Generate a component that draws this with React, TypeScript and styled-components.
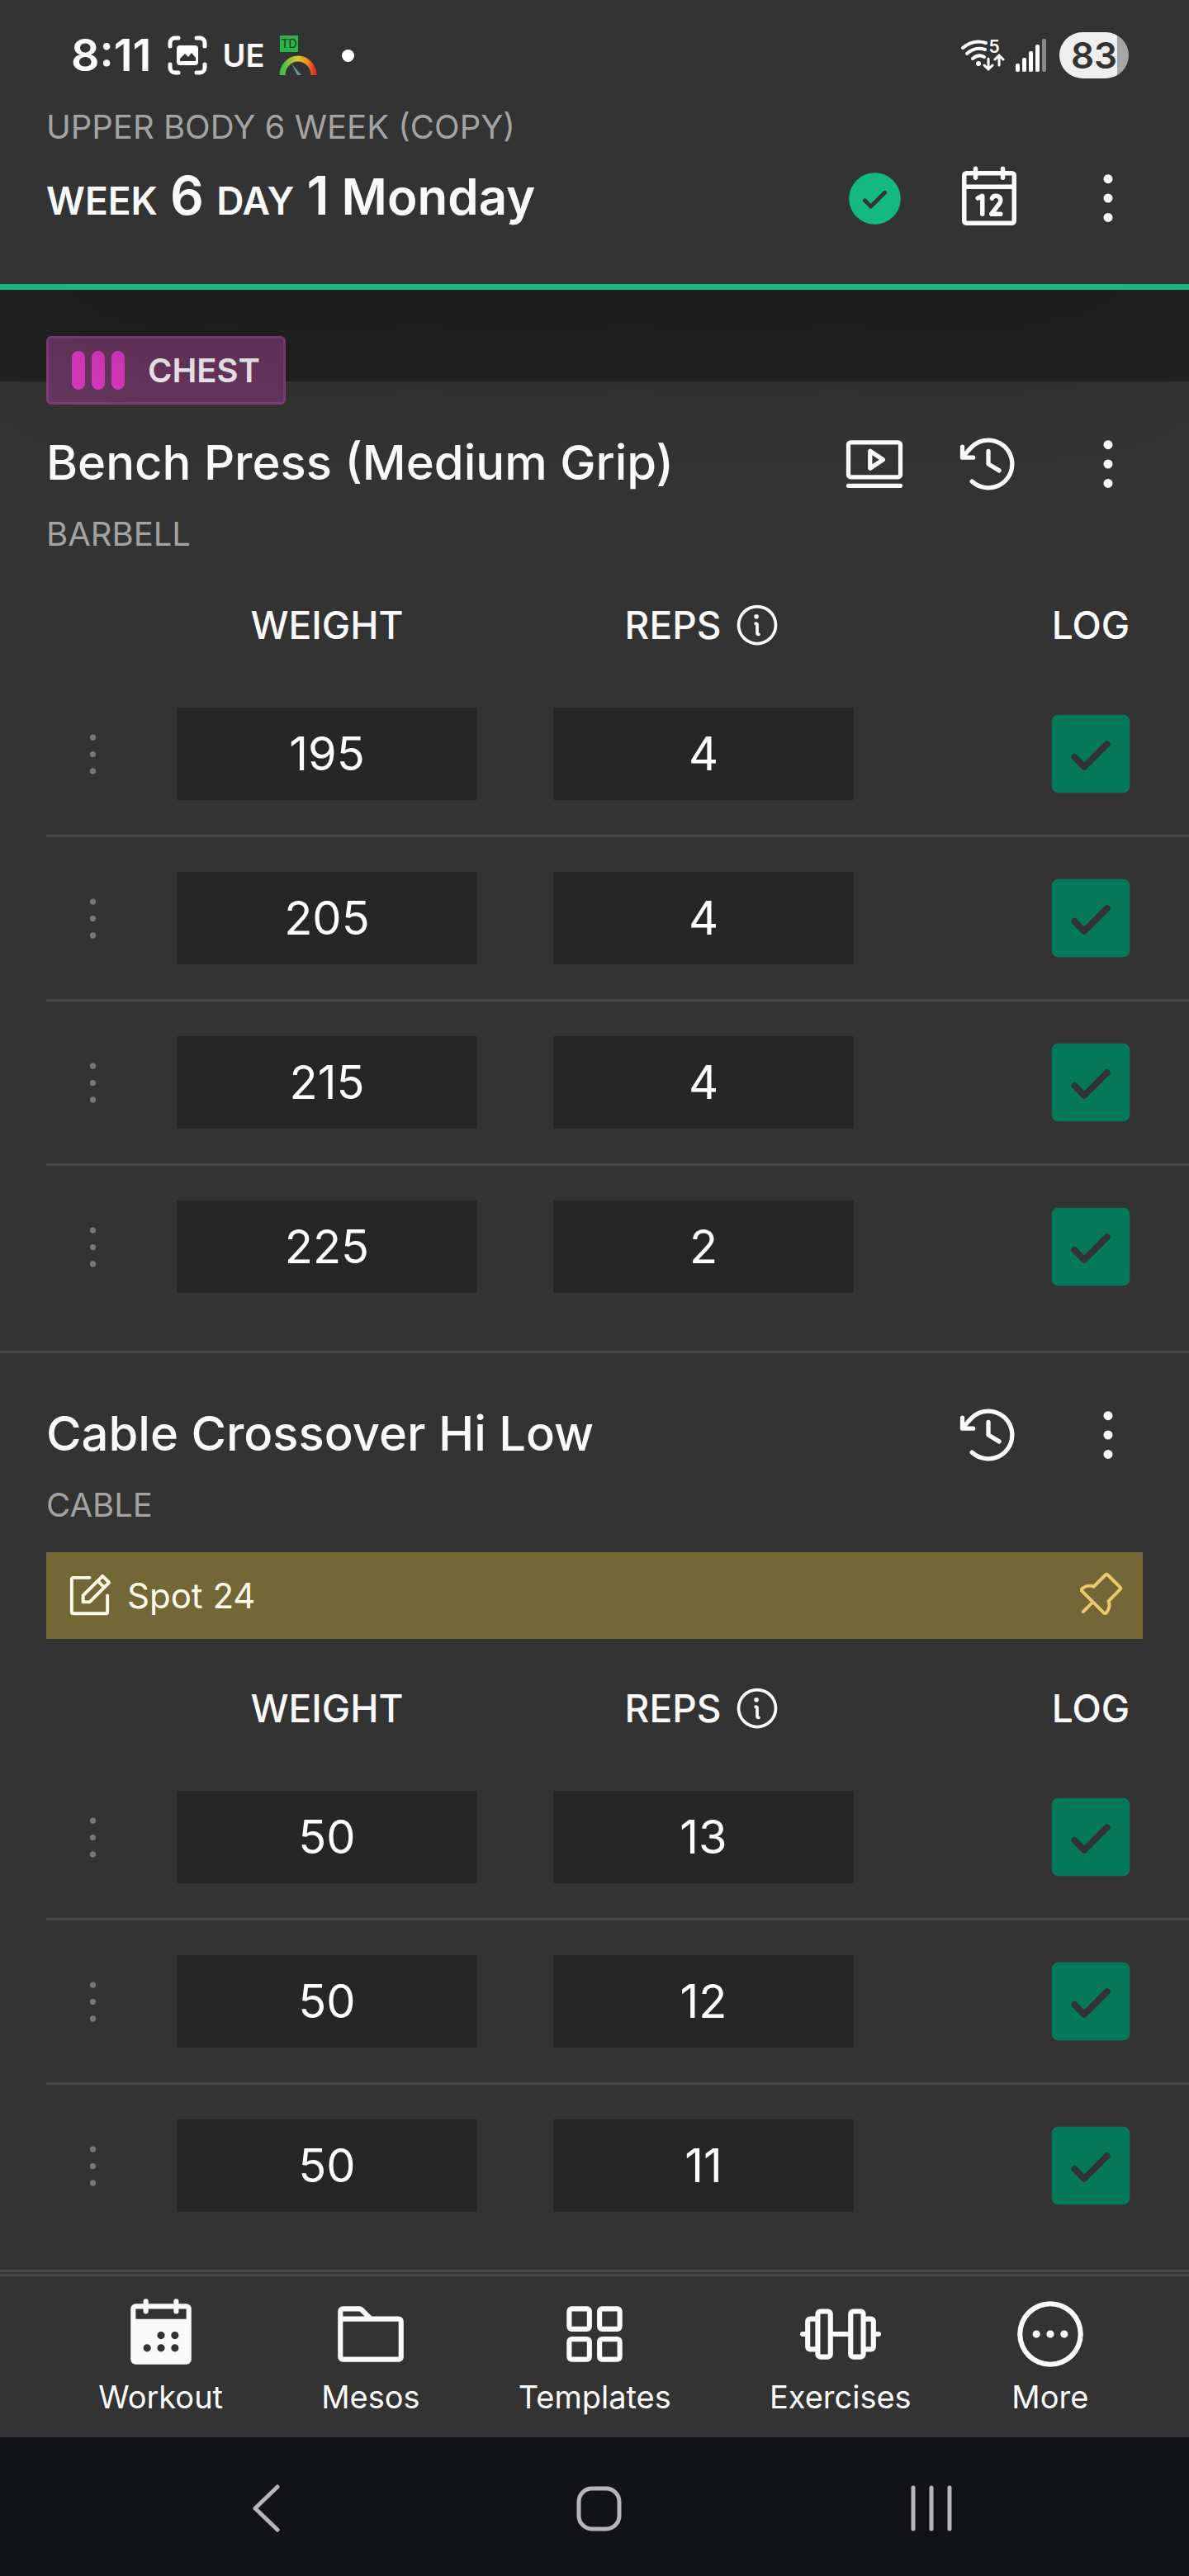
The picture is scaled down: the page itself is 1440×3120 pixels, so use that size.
import React, { useState } from 'react';
import styled, { createGlobalStyle, css } from 'styled-components';
import {
  PiBarbell,
  PiCalendar,
  PiCalendarDotsFill,
  PiCheckCircleFill,
  PiCheckSquareFill,
  PiClockCounterClockwise,
  PiDotsThreeCircle,
  PiDotsThreeVertical,
  PiDotsThreeVerticalBold,
  PiFolder,
  PiInfo,
  PiNotePencil,
  PiPushPin,
  PiSquaresFour,
  PiVideo,
} from 'react-icons/pi';

const color = {
  panel: '#333333',
  strip: '#222222',
  well: '#262626',
  line: '#464646',
  text: '#fafafa',
  muted: '#a3a3a3',
  faint: '#777777',
  green: '#14b881',
  greenDark: '#047857',
  pink: '#db39bd',
  note: '#736637',
  pin: '#e8ca6d',
  system: '#121317',
  systemIcon: '#b6b6b8',
};

const GlobalStyle = createGlobalStyle`
  *, *::before, *::after { box-sizing: border-box; }
  body {
    margin: 0;
    background: ${color.panel};
    color: ${color.text};
    font-family: Inter, "Noto Sans", sans-serif;
  }
  svg { display: block; flex: none; }
`;

const Screen = styled.div`
  min-height: 100vh;
  display: flex;
  flex-direction: column;
`;

/* ---------- header ---------- */

const Header = styled.header`
  position: sticky;
  top: 0;
  z-index: 2;
  background: ${color.panel};
  border-bottom: 7px solid ${color.green};
  box-shadow: 0 88px 175px -42px rgba(0, 0, 0, 0.25);
`;

const StatusBar = styled.div`
  height: 134px;
  padding: 0 73px 0 86px;
  display: flex;
  align-items: center;
  justify-content: space-between;
`;

const StatusGroup = styled.div<{ $gap: number }>`
  display: flex;
  align-items: center;
  gap: ${(p) => p.$gap}px;
`;

const Clock = styled.time`
  font-size: 54px;
  line-height: 60px;
  font-weight: 600;
  margin-right: 2px;
`;

const Carrier = styled.span`
  font-size: 38px;
  line-height: 48px;
  font-weight: 600;
`;

const NotificationDot = styled.span`
  width: 15px;
  height: 15px;
  margin-left: 12px;
  border-radius: 50%;
  background: #ffffff;
`;

const Battery = styled.span`
  width: 84px;
  height: 56px;
  margin-left: 4px;
  border-radius: 28px;
  display: grid;
  place-items: center;
  background: linear-gradient(90deg, #efefef 83%, #a5a5a5 83%);
  color: ${color.panel};
  font-size: 44px;
  line-height: 56px;
  font-weight: 600;
`;

const PlanName = styled.p`
  margin: 0;
  padding: 0 56px;
  color: ${color.muted};
  font-size: 40px;
  line-height: 40px;
`;

const TitleRow = styled.div`
  display: flex;
  align-items: center;
  justify-content: space-between;
  height: 88px;
`;

const DayRow = styled(TitleRow)`
  margin: 22px 0 60px;
  padding: 0 56px;
`;

const DayTitle = styled.h1`
  margin: 0;
  font-size: 60px;
  line-height: 88px;
  font-weight: 600;
`;

const DayWord = styled.span`
  font-size: 46px;
`;

const DayNumber = styled.span`
  font-size: 64px;
`;

const Actions = styled.div`
  display: flex;
  align-items: center;
  gap: 58px;
`;

const ActionPair = styled.div`
  display: flex;
  align-items: center;
  gap: 52px;
`;

const IconButton = styled.button<{ $tint?: string }>`
  width: 86px;
  height: 88px;
  padding: 0;
  border: 0;
  background: none;
  color: ${(p) => p.$tint ?? color.text};
  display: grid;
  place-items: center;
  cursor: pointer;
`;

/* ---------- exercise sections ---------- */

const Main = styled.main`
  flex: 1;
  padding-bottom: 2px;
`;

const Strip = styled.div`
  height: 111px;
  background: ${color.strip};
`;

const Section = styled.section<{ $tagged: boolean }>`
  padding-left: 56px;
  padding-bottom: 28px;
  border-bottom: 3px solid ${color.line};
  ${(p) =>
    !p.$tagged &&
    css`
      padding-top: 55px;
    `}
`;

const Inset = styled.div`
  padding-right: 56px;
`;

const MuscleTag = styled.div`
  position: relative;
  width: fit-content;
  height: 83px;
  margin: -55px 0 28px;
  padding: 0 28px;
  display: flex;
  align-items: center;
  gap: 28px;
  border: 3px solid #843c79;
  border-radius: 6px;
  background: #67365f;
  color: #f4ecf3;
  font-size: 40px;
  font-weight: 600;
`;

const Bars = styled.span`
  display: flex;
  gap: 8px;
`;

const Bar = styled.span`
  width: 16px;
  height: 47px;
  border-radius: 8px;
  background: ${color.pink};
`;

const ExerciseName = styled.h2`
  margin: 0;
  padding-bottom: 4px;
  font-size: 58px;
  line-height: 84px;
  font-weight: 500;
`;

const Equipment = styled.p`
  margin: 15px 0 0;
  color: ${color.muted};
  font-size: 40px;
  line-height: 52px;
`;

const Note = styled.div`
  display: flex;
  align-items: center;
  gap: 14px;
  height: 105px;
  margin-top: 31px;
  padding: 0 21px;
  background: ${color.note};
  color: #fffbeb;
`;

const NoteText = styled.span`
  flex: 1;
  font-size: 42px;
  line-height: 52px;
`;

const NoteButton = styled.button`
  padding: 0;
  border: 0;
  background: none;
  color: ${color.pin};
  cursor: pointer;
`;

const SetTable = styled.table`
  display: block;
  margin-top: 54px;
`;

const TableHead = styled.thead`
  display: block;
  padding-bottom: 28px;
`;

const TableBody = styled.tbody`
  display: block;
`;

const rowGrid = css`
  display: grid;
  grid-template-columns: 112px 3fr 3fr 2fr;
  align-items: center;
  padding-right: 56px;
`;

const HeadRow = styled.tr`
  ${rowGrid}
  height: 60px;
`;

const HeadCell = styled.th<{ $end?: boolean }>`
  padding: 0;
  display: flex;
  align-items: center;
  justify-content: ${(p) => (p.$end ? 'flex-end' : 'center')};
  gap: 14px;
  font-size: 46px;
  line-height: 60px;
  font-weight: 500;
`;

const LogLabel = styled.span`
  width: 126px;
  text-align: center;
`;

const InfoButton = styled(NoteButton)`
  color: ${color.text};
`;

const SetRow = styled.tr`
  ${rowGrid}
  height: 199px;
  border-bottom: 3px solid ${color.line};

  &:last-child {
    height: 196px;
    border-bottom: 0;
  }
`;

const Cell = styled.td<{ $end?: boolean }>`
  padding: 0;
  display: flex;
  justify-content: ${(p) => (p.$end ? 'flex-end' : 'center')};
`;

const NumberInput = styled.input`
  width: 80%;
  height: 112px;
  padding: 0;
  border: 0;
  border-radius: 0;
  background: ${color.well};
  color: #ffffff;
  font-family: inherit;
  font-size: 56px;
  text-align: center;
`;

const LogCheck = styled.label`
  position: relative;
  display: block;
  color: ${color.greenDark};
  cursor: pointer;
`;

const HiddenCheckbox = styled.input`
  position: absolute;
  inset: 0;
  width: 100%;
  height: 100%;
  margin: 0;
  opacity: 0;

  &:not(:checked) + svg {
    opacity: 0.4;
  }
`;

/* ---------- bottom navigation ---------- */

const Footer = styled.footer`
  position: sticky;
  bottom: 0;
  z-index: 1;
`;

const TabBar = styled.nav`
  display: flex;
  justify-content: space-evenly;
  height: 198px;
  padding-top: 21px;
  border-top: 3px solid ${color.line};
  background: ${color.panel};
`;

const TabLink = styled.a`
  display: flex;
  flex-direction: column;
  align-items: center;
  gap: 2px;
  color: ${color.text};
  font-size: 38px;
  line-height: 50px;
  text-decoration: none;
`;

const SystemBar = styled.div`
  display: grid;
  grid-template-columns: repeat(3, 1fr);
  align-items: center;
  justify-items: center;
  height: 168px;
  padding: 4px 110px 0 120px;
  background: ${color.system};
`;

const SystemButton = styled(NoteButton)`
  color: ${color.systemIcon};
`;

/* ---------- drawings ---------- */

const CaptureIcon = () => (
  <svg width="48" height="48" viewBox="0 0 48 48" fill="none" aria-hidden="true">
    <path
      d="M3 13V9a6 6 0 0 1 6-6h4M35 3h4a6 6 0 0 1 6 6v4M45 35v4a6 6 0 0 1-6 6h-4M13 45H9a6 6 0 0 1-6-6v-4"
      stroke="#fff"
      strokeWidth="5"
      strokeLinecap="round"
    />
    <rect x="11" y="12" width="26" height="24" rx="4" fill="#fff" />
    <path d="M15 31v-3l6-6 4 4 4-5 5 6v4z" fill={color.panel} />
  </svg>
);

const BankIcon = () => (
  <svg width="46" height="50" viewBox="0 0 46 50" aria-hidden="true">
    <defs>
      <linearGradient id="gauge">
        <stop offset="0" stopColor="#3fc14c" />
        <stop offset="0.5" stopColor="#e2c62a" />
        <stop offset="0.8" stopColor="#f08a24" />
        <stop offset="1" stopColor="#e8331c" />
      </linearGradient>
    </defs>
    <rect x="1" y="1" width="22" height="20" fill="#2cb34a" />
    <text x="12" y="16" textAnchor="middle" fontSize="14" fill="#12331a">
      TD
    </text>
    <path d="M4 49a19 20 0 0 1 38 0" fill="none" stroke="url(#gauge)" strokeWidth="7" />
    <path d="M15 35l12 14h-5z" fill="#5f9a97" />
  </svg>
);

const WifiIcon = () => (
  <svg width="54" height="52" viewBox="0 -6 54 52" fill="none" stroke="#fff" aria-hidden="true">
    <path d="M3 11Q16 0 31 5M8 18Q18 9 30 13M15 24Q22 18 29 22" strokeWidth="4" strokeLinecap="round" />
    <circle cx="22" cy="30" r="3" fill="#fff" stroke="none" />
    <path d="M34 24v12M29 32l5 5 5-5M47 32V21M42 25l5-5 5 5" strokeWidth="3" strokeLinecap="round" />
    <text x="41" y="17" textAnchor="middle" fontSize="21" fontWeight="600" fill="#fff" stroke="none">
      5
    </text>
  </svg>
);

const SignalIcon = () => (
  <svg width="38" height="42" viewBox="0 0 38 42" aria-hidden="true">
    <g fill="#fff">
      <rect x="1" y="31" width="5" height="10" rx="2" />
      <rect x="9" y="24" width="5" height="17" rx="2" />
      <rect x="17" y="16" width="5" height="25" rx="2" />
      <rect x="25" y="8" width="5" height="33" rx="2" />
    </g>
    <rect x="33" y="1" width="5" height="40" rx="2" fill="#8a8a8a" />
  </svg>
);

const BackIcon = () => (
  <svg width="60" height="60" viewBox="0 0 60 60" fill="none" stroke="currentColor" aria-hidden="true">
    <path d="M44 4L17 30l27 26" strokeWidth="5" strokeLinecap="round" strokeLinejoin="round" />
  </svg>
);

const HomeIcon = () => (
  <svg width="60" height="60" viewBox="0 0 60 60" fill="none" stroke="currentColor" aria-hidden="true">
    <rect x="6" y="6" width="49" height="49" rx="16" strokeWidth="5" />
  </svg>
);

const RecentsIcon = () => (
  <svg width="60" height="60" viewBox="0 0 60 60" stroke="currentColor" aria-hidden="true">
    <path d="M8 5v50M30 5v50M52 5v50" strokeWidth="5" strokeLinecap="round" />
  </svg>
);

/* ---------- data ---------- */

type SetEntry = { weight: number; reps: number };
type Exercise = {
  name: string;
  equipment: string;
  muscle?: string;
  video?: boolean;
  note?: string;
  sets: SetEntry[];
};

const exercises: Exercise[] = [
  {
    name: 'Bench Press (Medium Grip)',
    equipment: 'BARBELL',
    muscle: 'CHEST',
    video: true,
    sets: [
      { weight: 195, reps: 4 },
      { weight: 205, reps: 4 },
      { weight: 215, reps: 4 },
      { weight: 225, reps: 2 },
    ],
  },
  {
    name: 'Cable Crossover Hi Low',
    equipment: 'CABLE',
    note: 'Spot 24',
    sets: [
      { weight: 50, reps: 13 },
      { weight: 50, reps: 12 },
      { weight: 50, reps: 11 },
    ],
  },
];

const tabs = [
  { label: 'Workout', Icon: PiCalendarDotsFill },
  { label: 'Mesos', Icon: PiFolder },
  { label: 'Templates', Icon: PiSquaresFour },
  { label: 'Exercises', Icon: PiBarbell },
  { label: 'More', Icon: PiDotsThreeCircle },
];

const SetLine = ({ entry, index }: { entry: SetEntry; index: number }) => {
  const [weight, setWeight] = useState(String(entry.weight));
  const [reps, setReps] = useState(String(entry.reps));
  const [done, setDone] = useState(true);
  return (
    <SetRow>
      <Cell>
        <IconButton type="button" $tint={color.faint} aria-label={`Set ${index + 1} options`}>
          <PiDotsThreeVertical size={77} />
        </IconButton>
      </Cell>
      <Cell>
        <NumberInput
          inputMode="decimal"
          aria-label={`Set ${index + 1} weight`}
          value={weight}
          onChange={(e) => setWeight(e.target.value)}
        />
      </Cell>
      <Cell>
        <NumberInput
          inputMode="numeric"
          aria-label={`Set ${index + 1} reps`}
          value={reps}
          onChange={(e) => setReps(e.target.value)}
        />
      </Cell>
      <Cell $end>
        <LogCheck>
          <HiddenCheckbox
            type="checkbox"
            aria-label={`Log set ${index + 1}`}
            checked={done}
            onChange={(e) => setDone(e.target.checked)}
          />
          <PiCheckSquareFill size={126} />
        </LogCheck>
      </Cell>
    </SetRow>
  );
};

const ExerciseSection = ({ exercise }: { exercise: Exercise }) => (
  <Section $tagged={Boolean(exercise.muscle)}>
    <Inset>
      {exercise.muscle && (
        <MuscleTag>
          <Bars>
            <Bar />
            <Bar />
            <Bar />
          </Bars>
          {exercise.muscle}
        </MuscleTag>
      )}
      <TitleRow>
        <ExerciseName>{exercise.name}</ExerciseName>
        <Actions>
          <ActionPair>
            {exercise.video && (
              <IconButton type="button" aria-label="Watch video">
                <PiVideo size={84} />
              </IconButton>
            )}
            <IconButton type="button" aria-label="History">
              <PiClockCounterClockwise size={84} />
            </IconButton>
          </ActionPair>
          <IconButton type="button" aria-label="Exercise options">
            <PiDotsThreeVerticalBold size={88} />
          </IconButton>
        </Actions>
      </TitleRow>
      <Equipment>{exercise.equipment}</Equipment>
      {exercise.note && (
        <Note>
          <PiNotePencil size={63} />
          <NoteText>{exercise.note}</NoteText>
          <NoteButton type="button" aria-label="Unpin note">
            <PiPushPin size={63} />
          </NoteButton>
        </Note>
      )}
    </Inset>
    <SetTable>
      <TableHead>
        <HeadRow>
          <HeadCell aria-label="Options" />
          <HeadCell>WEIGHT</HeadCell>
          <HeadCell>
            REPS
            <InfoButton type="button" aria-label="About reps">
              <PiInfo size={60} />
            </InfoButton>
          </HeadCell>
          <HeadCell $end>
            <LogLabel>LOG</LogLabel>
          </HeadCell>
        </HeadRow>
      </TableHead>
      <TableBody>
        {exercise.sets.map((entry, i) => (
          <SetLine key={i} entry={entry} index={i} />
        ))}
      </TableBody>
    </SetTable>
  </Section>
);

export default function App() {
  return (
    <>
      <GlobalStyle />
      <Screen>
        <Header>
          <StatusBar>
            <StatusGroup $gap={18}>
              <Clock>8:11</Clock>
              <CaptureIcon />
              <Carrier>UE</Carrier>
              <BankIcon />
              <NotificationDot />
            </StatusGroup>
            <StatusGroup $gap={12}>
              <WifiIcon />
              <SignalIcon />
              <Battery>83</Battery>
            </StatusGroup>
          </StatusBar>
          <PlanName>UPPER BODY 6 WEEK (COPY)</PlanName>
          <DayRow>
            <DayTitle>
              <DayWord>WEEK</DayWord> <DayNumber>6</DayNumber> <DayWord>DAY</DayWord>{' '}
              <DayNumber>1</DayNumber> Monday
            </DayTitle>
            <Actions>
              <ActionPair>
                <IconButton type="button" $tint={color.green} aria-label="Workout complete">
                  <PiCheckCircleFill size={77} />
                </IconButton>
                <IconButton type="button" aria-label="Calendar">
                  <PiCalendar size={88} />
                </IconButton>
              </ActionPair>
              <IconButton type="button" aria-label="Workout options">
                <PiDotsThreeVerticalBold size={88} />
              </IconButton>
            </Actions>
          </DayRow>
        </Header>
        <Main>
          <Strip />
          {exercises.map((exercise) => (
            <ExerciseSection key={exercise.name} exercise={exercise} />
          ))}
        </Main>
        <Footer>
          <TabBar>
            {tabs.map(({ label, Icon }) => (
              <TabLink key={label} href={`#${label.toLowerCase()}`}>
                <Icon size={98} />
                {label}
              </TabLink>
            ))}
          </TabBar>
          <SystemBar>
            <SystemButton type="button" aria-label="Back">
              <BackIcon />
            </SystemButton>
            <SystemButton type="button" aria-label="Home">
              <HomeIcon />
            </SystemButton>
            <SystemButton type="button" aria-label="Recent apps">
              <RecentsIcon />
            </SystemButton>
          </SystemBar>
        </Footer>
      </Screen>
    </>
  );
}
